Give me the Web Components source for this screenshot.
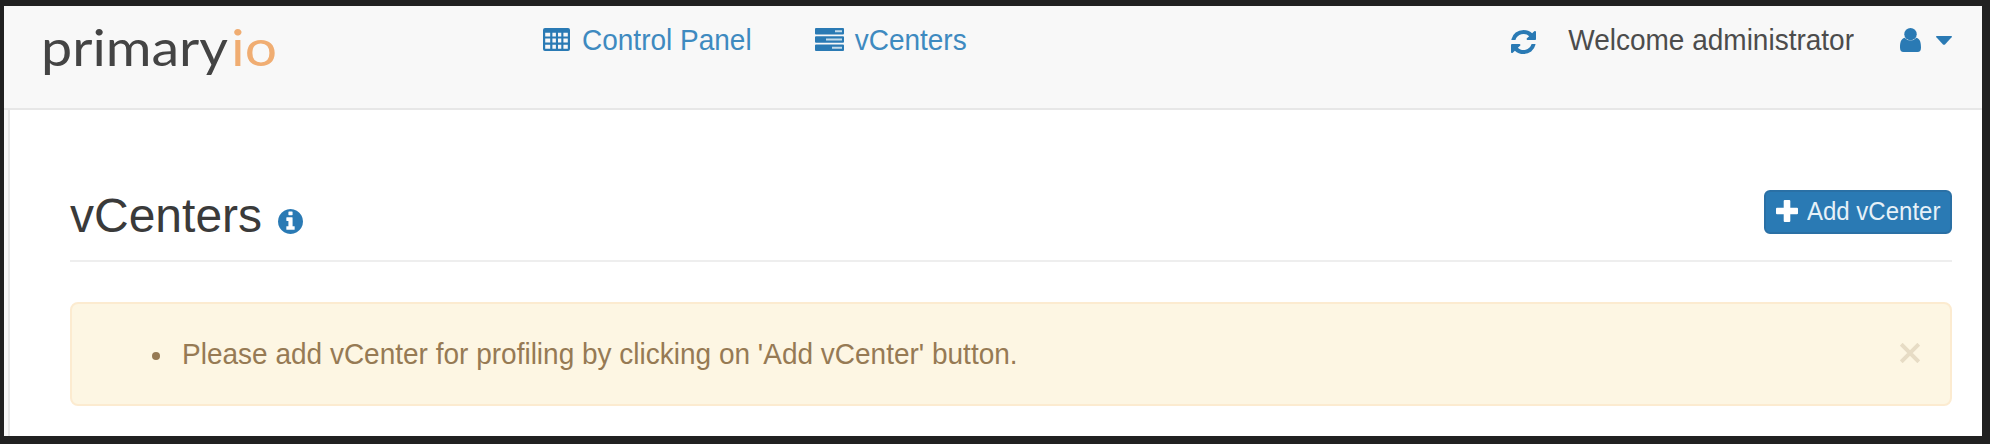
<!DOCTYPE html>
<html lang="en">
<head>
<meta charset="utf-8">
<title>vCenters</title>
<style>
html,body{margin:0;height:100%;background:#212121}
body{font-family:"Liberation Sans",Arial,sans-serif;font-size:28px;color:#4c4c4c;overflow:hidden}
</style>
</head>
<body>
<app-shell>
  <app-header slot="header"></app-header>
  <page-title heading="vCenters"><action-button>Add vCenter</action-button></page-title>
  <alert-box>Please add vCenter for profiling by clicking on 'Add vCenter' button.</alert-box>
</app-shell>
<script>
const define = (name, html) => customElements.define(name, class extends HTMLElement {
  constructor() {
    super();
    this.attachShadow({ mode: 'open' }).innerHTML = html;
  }
  connectedCallback() {
    const h = this.shadowRoot.querySelector('[data-heading]');
    if (h) h.textContent = this.getAttribute('heading');
  }
});

const icons = {
  table: ['0 0 27 23', '<path fill-rule="evenodd" d="M2 0H25Q27 0 27 2V21Q27 23 25 23H2Q0 23 0 21V2Q0 0 2 0ZM2.200 4.800V8.400H7.200V4.800ZM9.400 4.800V8.400H12.900V4.800ZM15 4.800V8.400H18.300V4.800ZM20.400 4.800V8.400H24.800V4.800ZM2.200 10.600V14.600H7.200V10.600ZM9.400 10.600V14.600H12.900V10.600ZM15 10.600V14.600H18.300V10.600ZM20.400 10.600V14.600H24.800V10.600ZM2.200 16.800V20.800H7.200V16.800ZM9.400 16.800V20.800H12.900V16.800ZM15 16.800V20.800H18.300V16.800ZM20.400 16.800V20.800H24.800V16.800Z"/>'],
  server: ['0 0 29 23', '<path d="M1 0H28Q29 0 29 1V5.500Q29 6.500 28 6.500H1Q0 6.500 0 5.500V1Q0 0 1 0ZM1 8.200H28Q29 8.200 29 9.200V13.800Q29 14.800 28 14.800H1Q0 14.800 0 13.800V9.200Q0 8.200 1 8.200ZM1 16.500H28Q29 16.500 29 17.500V22Q29 23 28 23H1Q0 23 0 22V17.500Q0 16.500 1 16.500Z"/><path fill="#c3dbea" d="M20 2.200H27V4.300H20ZM11 10.400H27V12.600H11ZM17 18.700H27V20.800H17Z"/>'],
  refresh: ['128 128 1536 1536', '<path d="M1639 1056q0 5-1 7-64 268-268 434.500t-478 166.500q-146 0-282.500-55t-243.500-157l-129 129q-19 19-45 19t-45-19-19-45v-448q0-26 19-45t45-19h448q26 0 45 19t19 45-19 45l-137 137q71 66 161 102t187 36q134 0 250-65t186-179q11-17 53-117 8-23 30-23h192q13 0 22.500 9.500t9.500 22.500zm25-800v448q0 26-19 45t-45 19h-448q-26 0-45-19t-19-45 19-45l138-138q-148-137-349-137-134 0-250 65t-186 179q-11 17-53 117-8 23-30 23h-199q-13 0-22.500-9.500t-9.500-22.500v-7q65-268 270-434.500t480-166.500q146 0 284 55.500t245 156.500l130-129q19-19 45-19t45 19 19 45z"/>'],
  user: ['0 0 21 24', '<circle cx="10.500" cy="6.200" r="6.200"/><path d="M4.600 9.800Q7 12.600 10.500 12.600T16.400 9.800C20 10.700 21 14.500 21 19.500Q21 24 17.500 24H3.500Q0 24 0 19.500C0 14.500 1 10.700 4.600 9.800Z"/>'],
  caret: ['0 0 16 9', '<path d="M.6 0H15.400Q16.400.2 15.600 1.200L9 8.400Q8 9.200 7 8.400L.4 1.200Q-.4.2.6 0Z"/>'],
  info: ['128 128 1536 1536', '<path d="M1152 1376v-160q0-14-9-23t-23-9h-96v-512q0-14-9-23t-23-9h-320q-14 0-23 9t-9 23v160q0 14 9 23t23 9h96v320h-96q-14 0-23 9t-9 23v160q0 14 9 23t23 9h448q14 0 23-9t9-23zm-128-896v-160q0-14-9-23t-23-9h-192q-14 0-23 9t-9 23v160q0 14 9 23t23 9h192q14 0 23-9t9-23zm640 416q0 209-103 385.500t-279.500 279.500-385.500 103-385.500-103-279.500-279.500-103-385.500 103-385.500 279.500-279.500 385.500-103 385.500 103 279.500 279.500 103 385.500z"/>'],
  plus: ['0 0 22 22', '<path d="M8.800 0H13.200Q14.300 0 14.300 1V7.700H21Q22 7.700 22 8.700V13.300Q22 14.300 21 14.300H14.300V21Q14.300 22 13.200 22H8.800Q7.700 22 7.700 21V14.300H1Q0 14.300 0 13.300V8.700Q0 7.700 1 7.700H7.700V1Q7.700 0 8.800 0Z"/>'],
  close: ['0 0 20 20', '<path d="M1.200 1.200L18.800 18.800M18.800 1.200L1.200 18.800" stroke="currentColor" stroke-width="4"/>']
};
customElements.define('ui-icon', class extends HTMLElement {
  constructor() { super(); this.attachShadow({ mode: 'open' }); }
  connectedCallback() {
    const [box, art] = icons[this.getAttribute('name')];
    this.shadowRoot.innerHTML = `<style>:host{display:block;flex:none}svg{display:block;width:100%;height:100%;fill:currentColor}</style><svg viewBox="${box}" preserveAspectRatio="none">${art}</svg>`;
  }
});

define('brand-logo', `<style>
:host{display:block;width:240px;height:80px;margin-top:-8px}
svg{display:block;overflow:visible;font-family:Lato,sans-serif;font-size:50px;fill:#444}
.io{fill:#f0ad72}
</style><svg width="240" height="80" viewBox="0 0 240 80"><text x="-2" y="50" textLength="187" lengthAdjust="spacingAndGlyphs">primary</text><text class="io" x="188" y="50" textLength="46" lengthAdjust="spacingAndGlyphs">io</text></svg>`);

define('nav-link', `<style>
:host{display:flex;align-items:flex-start;color:#3e8ac0;line-height:34px}
.label{transform:scaleY(1.07);transform-origin:0 27px}
</style><slot name="icon"></slot><span class="label"><slot></slot></span>`);

define('app-header', `<style>
:host{display:flex;box-sizing:border-box;height:104px;padding:18px 30px 0 39px;background:#f8f8f8;border-bottom:2px solid #e7e7e7;align-items:flex-start}
nav{display:flex;gap:64px;margin-left:260px}
ui-icon{color:#2a7ab4}
.t{width:27px;height:23px;margin:4px 12px 0 0}
.s{width:29px;height:23px;margin:4px 11px 0 -1px}
.right{display:flex;margin-left:auto;line-height:34px}
.r{width:25px;height:24px;margin:6px 32px 0 0}
.u{width:21px;height:24px;margin:4px 15px 0 46px}
.c{width:16px;height:9px;margin-top:12px}
.welcome{transform:scaleY(1.07);transform-origin:0 27px}
</style>
<brand-logo></brand-logo>
<nav><nav-link><ui-icon slot="icon" class="t" name="table"></ui-icon>Control Panel</nav-link>
<nav-link><ui-icon slot="icon" class="s" name="server"></ui-icon>vCenters</nav-link></nav>
<div class="right"><ui-icon class="r" name="refresh"></ui-icon><span class="welcome">Welcome administrator</span><ui-icon class="u" name="user"></ui-icon><ui-icon class="c" name="caret"></ui-icon></div>`);

define('page-title', `<style>
:host{display:flex;box-sizing:border-box;height:74px;border-bottom:2px solid #eee;align-items:flex-start}
h1{font-size:48px;line-height:56px;font-weight:400;margin:0;color:#3a3a3a}
ui-icon{width:25px;height:25px;color:#2a7ab4;margin:21px 0 0 16px}
.action{margin:2px 0 0 auto}
</style><h1 data-heading></h1><ui-icon name="info"></ui-icon><div class="action"><slot></slot></div>`);

define('action-button', `<style>
:host{display:block}
button{display:flex;box-sizing:border-box;width:188px;height:44px;padding:0 0 0 10px;border:2px solid #2a70a5;border-radius:6px;background:#2a7ab4;color:#e6f1f8;font:24px/40px "Liberation Sans",Arial,sans-serif;white-space:nowrap}
ui-icon{width:22px;height:22px;margin:8px 9px 0 0;color:#fff}
.label{transform:scaleY(1.07);transform-origin:0 28px}
</style><button><ui-icon name="plus"></ui-icon><span class="label"><slot></slot></span></button>`);

define('alert-box', `<style>
:host{display:flex;box-sizing:border-box;height:104px;margin-top:40px;padding:34px 30px 0 80px;border:2px solid #fcebd0;border-radius:8px;background:#fdf6e3;color:#967a54;line-height:34px}
.dot{width:8px;height:8px;border-radius:50%;background:currentColor;margin:14px 22px 0 0}
.msg{transform:scaleY(1.07);transform-origin:0 27px}
ui-icon{width:20px;height:20px;margin:5px 0 0 auto;color:#e7dcc5}
</style><span class="dot"></span><span class="msg"><slot></slot></span><ui-icon name="close"></ui-icon>`);

define('app-shell', `<style>
:host{display:block;box-sizing:border-box;width:1990px;height:444px;padding:6px 8px 8px 4px;background:#212121}
.window{height:430px;background:#f8f8f8}
main{box-sizing:border-box;height:326px;margin-left:4px;border-left:2px solid #e7e7e7;background:#fff;padding:78px 30px 0 60px}
</style><div class="window"><slot name="header"></slot><main><slot></slot></main></div>`);
</script>
</body>
</html>
